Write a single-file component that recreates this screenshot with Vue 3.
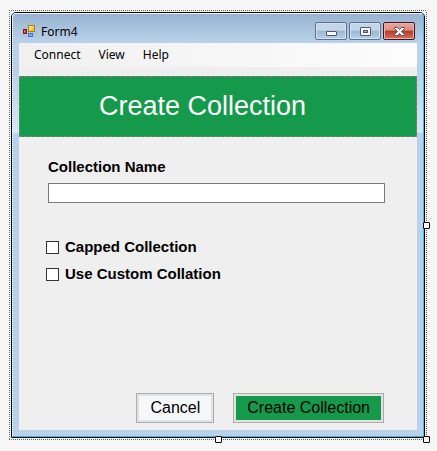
<script setup>
import { ref } from 'vue'

const menus = ['Connect', 'View', 'Help']
const name = ref('')
const options = ref([
  { id: 'capped', label: 'Capped Collection', on: false },
  { id: 'collation', label: 'Use Custom Collation', on: false },
])
</script>

<template>
  <main class="surface">
    <div class="selection">
      <section class="window">
        <div class="frame">
          <header class="titlebar">
            <svg class="app-icon" width="14" height="14" viewBox="0 0 14 14" shape-rendering="crispEdges" aria-hidden="true">
              <defs>
                <linearGradient id="gold" x1="0" y1="0" x2="1" y2="1">
                  <stop offset="0" stop-color="#fff0a0" />
                  <stop offset="1" stop-color="#f0b400" />
                </linearGradient>
              </defs>
              <path d="M0 0H6V1H1V5H0ZM0 10H1V12H6V13H0ZM11 12H13V8H14V13H11Z" fill="#b9bcc0" />
              <rect x="6" y="1" width="7" height="7" fill="#b57d10" />
              <rect x="7" y="2" width="5" height="5" fill="url(#gold)" />
              <rect x="1" y="5" width="4" height="5" fill="#8d1010" />
              <rect x="2" y="6" width="2" height="3" fill="#c9473c" />
              <rect x="2" y="7" width="1" height="1" fill="#f0a090" />
              <rect x="6" y="9" width="5" height="4" fill="#3c6fd0" />
              <rect x="7" y="10" width="3" height="2" fill="#7fb0f4" />
            </svg>
            <h1 class="caption">Form4</h1>
            <div class="controls">
              <button class="control" type="button" aria-label="Minimize">
                <svg width="13" height="11" viewBox="0 0 13 11" aria-hidden="true">
                  <rect x="1.5" y="5.5" width="10" height="4" rx="0.5" fill="#f6f6f6" stroke="#535666" />
                </svg>
              </button>
              <button class="control" type="button" aria-label="Maximize">
                <svg width="13" height="11" viewBox="0 0 13 11" aria-hidden="true">
                  <rect x="1.5" y="1.5" width="10" height="8" rx="0.5" fill="#f6f6f6" stroke="#535666" />
                  <rect x="4.5" y="4.5" width="4" height="2" fill="#8fb4d8" stroke="#535666" />
                </svg>
              </button>
              <button class="control close" type="button" aria-label="Close">
                <svg width="13" height="11" viewBox="0 0 13 11" aria-hidden="true">
                  <path
                    d="M1.5 1.5H4.5L6.5 3.5L8.5 1.5H11.5V2.5L8.5 5.5L11.5 8.5V9.5H8.5L6.5 7.5L4.5 9.5H1.5V8.5L4.5 5.5L1.5 2.5Z"
                    fill="#f4f4f4"
                    stroke="#535666"
                    stroke-linejoin="round"
                  />
                </svg>
              </button>
            </div>
          </header>

          <div class="client">
            <nav class="menubar">
              <button v-for="item in menus" :key="item" class="menu-item" type="button">{{ item }}</button>
            </nav>

            <h2 class="banner">Create Collection</h2>

            <form class="form" @submit.prevent>
              <label class="strong" for="collection-name">Collection Name</label>
              <input id="collection-name" v-model="name" class="text-box" type="text" />

              <div class="options">
                <label v-for="option in options" :key="option.id" class="option strong" :for="option.id">
                  <input :id="option.id" v-model="option.on" class="tick" type="checkbox" />
                  {{ option.label }}
                </label>
              </div>

              <div class="actions">
                <button class="action" type="button">Cancel</button>
                <button class="action primary" type="submit">Create Collection</button>
              </div>
            </form>
          </div>
        </div>
      </section>
      <span class="handle right"></span>
      <span class="handle bottom"></span>
      <span class="handle corner"></span>
    </div>
  </main>
</template>

<style>
body {
  margin: 0;
  background: #f6f6f6;
}
</style>

<style scoped>
* {
  box-sizing: border-box;
}

.surface {
  display: flex;
  min-height: 100vh;
  padding: 10px 10px 11px 9px;
  font-family: "Liberation Sans", Arial, sans-serif;
  color: #000;
}

.selection {
  position: relative;
  display: flex;
  flex: 1;
  padding: 2px;
  background:
    repeating-linear-gradient(90deg, #666 0 1px, #f6f6f6 1px 2px) top / 100% 1px no-repeat,
    repeating-linear-gradient(90deg, #666 0 1px, #f6f6f6 1px 2px) bottom / 100% 1px no-repeat,
    repeating-linear-gradient(#666 0 1px, #f6f6f6 1px 2px) left / 1px 100% no-repeat,
    repeating-linear-gradient(#666 0 1px, #f6f6f6 1px 2px) right / 1px 100% no-repeat;
}

.window {
  display: flex;
  flex: 1;
  border: 1px solid #000;
  border-radius: 5px 5px 0 0;
  background: #b9d1ea;
}

.frame {
  display: flex;
  flex: 1;
  flex-direction: column;
  padding: 0 6px 6px;
  border: 1px solid;
  border-color: #f4f8fc #35c5ea #35b8d8 #dcebf8;
  border-radius: 4px 4px 0 0;
  background: linear-gradient(#99b4d1 0, #b9d1ea 29px, #b9d1ea 60px, #d9e7f6 119px, #b9d1ea 119px);
}

.titlebar {
  display: flex;
  align-items: center;
  height: 29px;
  padding: 5px 2px 0 3px;
}

.caption {
  flex: 1;
  margin: 0 0 0 5px;
  padding-top: 2px;
  font: 12px/16px "Noto Sans", "Open Sans", sans-serif;
}

.controls {
  display: flex;
  gap: 2px;
}

.control {
  display: flex;
  align-items: center;
  justify-content: center;
  width: 32px;
  height: 18px;
  padding: 0;
  border: 1px solid #5d7090;
  border-radius: 2px;
  background: linear-gradient(#c3d6e9 0 45%, #9db6d1 50%, #b8d1ea);
  box-shadow: inset 0 0 0 1px #d3e2f1;
}

.close {
  border-color: #43141f;
  background: linear-gradient(#e9a99e, #dc8d80 45%, #b83a24 50%, #d4705c);
  box-shadow: inset 0 0 0 1px #e9b3a9;
}

.client {
  display: flex;
  flex: 1;
  flex-direction: column;
  background: #efefef;
}

.menubar {
  display: flex;
  gap: 8px;
  height: 24px;
  padding: 0 10px;
  background: linear-gradient(90deg, #f0f0f0, #fcfcfc);
}

.menu-item {
  padding: 0 5px;
  border: 0;
  background: none;
  color: #000;
  font: 12px/24px "Noto Sans", "Open Sans", sans-serif;
}

.banner {
  height: 61px;
  margin: 9px 0 0;
  padding-right: 31px;
  border: 1px dashed #857f80;
  background: #15994a;
  color: #fff;
  font-size: 27px;
  font-weight: 400;
  line-height: 59px;
  text-align: center;
}

.form {
  display: flex;
  flex: 1;
  flex-direction: column;
  padding: 20px 32px 7px 29px;
}

.strong {
  font-size: 15px;
  font-weight: 700;
  line-height: 20px;
}

.text-box {
  height: 20px;
  margin-top: 6px;
  padding: 0 3px;
  border: 1px solid #7a7a7a;
  border-radius: 0;
  background: #fff;
  font: inherit;
}

.options {
  display: flex;
  flex-direction: column;
  gap: 7px;
  margin: 34px 0 0 -2px;
}

.option {
  display: flex;
  align-items: center;
  gap: 6px;
}

.tick {
  width: 13px;
  height: 13px;
  margin: 0;
  appearance: none;
  border: 1px solid #333;
  background: #fff;
}

.tick:checked {
  background: #333;
  box-shadow: inset 0 0 0 2px #fff;
}

.actions {
  display: flex;
  justify-content: flex-end;
  gap: 19px;
  margin: auto 1px 0 0;
}

.action {
  height: 30px;
  padding: 0 13px;
  border: 1px solid #adadad;
  background: #f5f7fa;
  box-shadow: inset 0 0 0 2px #e1e1e1;
  color: #000;
  font: 16px/28px "Liberation Sans", Arial, sans-serif;
}

.primary {
  background: #15994a;
}

.handle {
  position: absolute;
  width: 7px;
  height: 7px;
  border: 1px solid #000;
  border-radius: 1px;
  background: #fff;
}

.right {
  top: calc(50% - 3px);
  right: -3px;
}

.bottom {
  bottom: -3px;
  left: calc(50% - 3px);
}

.corner {
  right: -3px;
  bottom: -3px;
}
</style>
